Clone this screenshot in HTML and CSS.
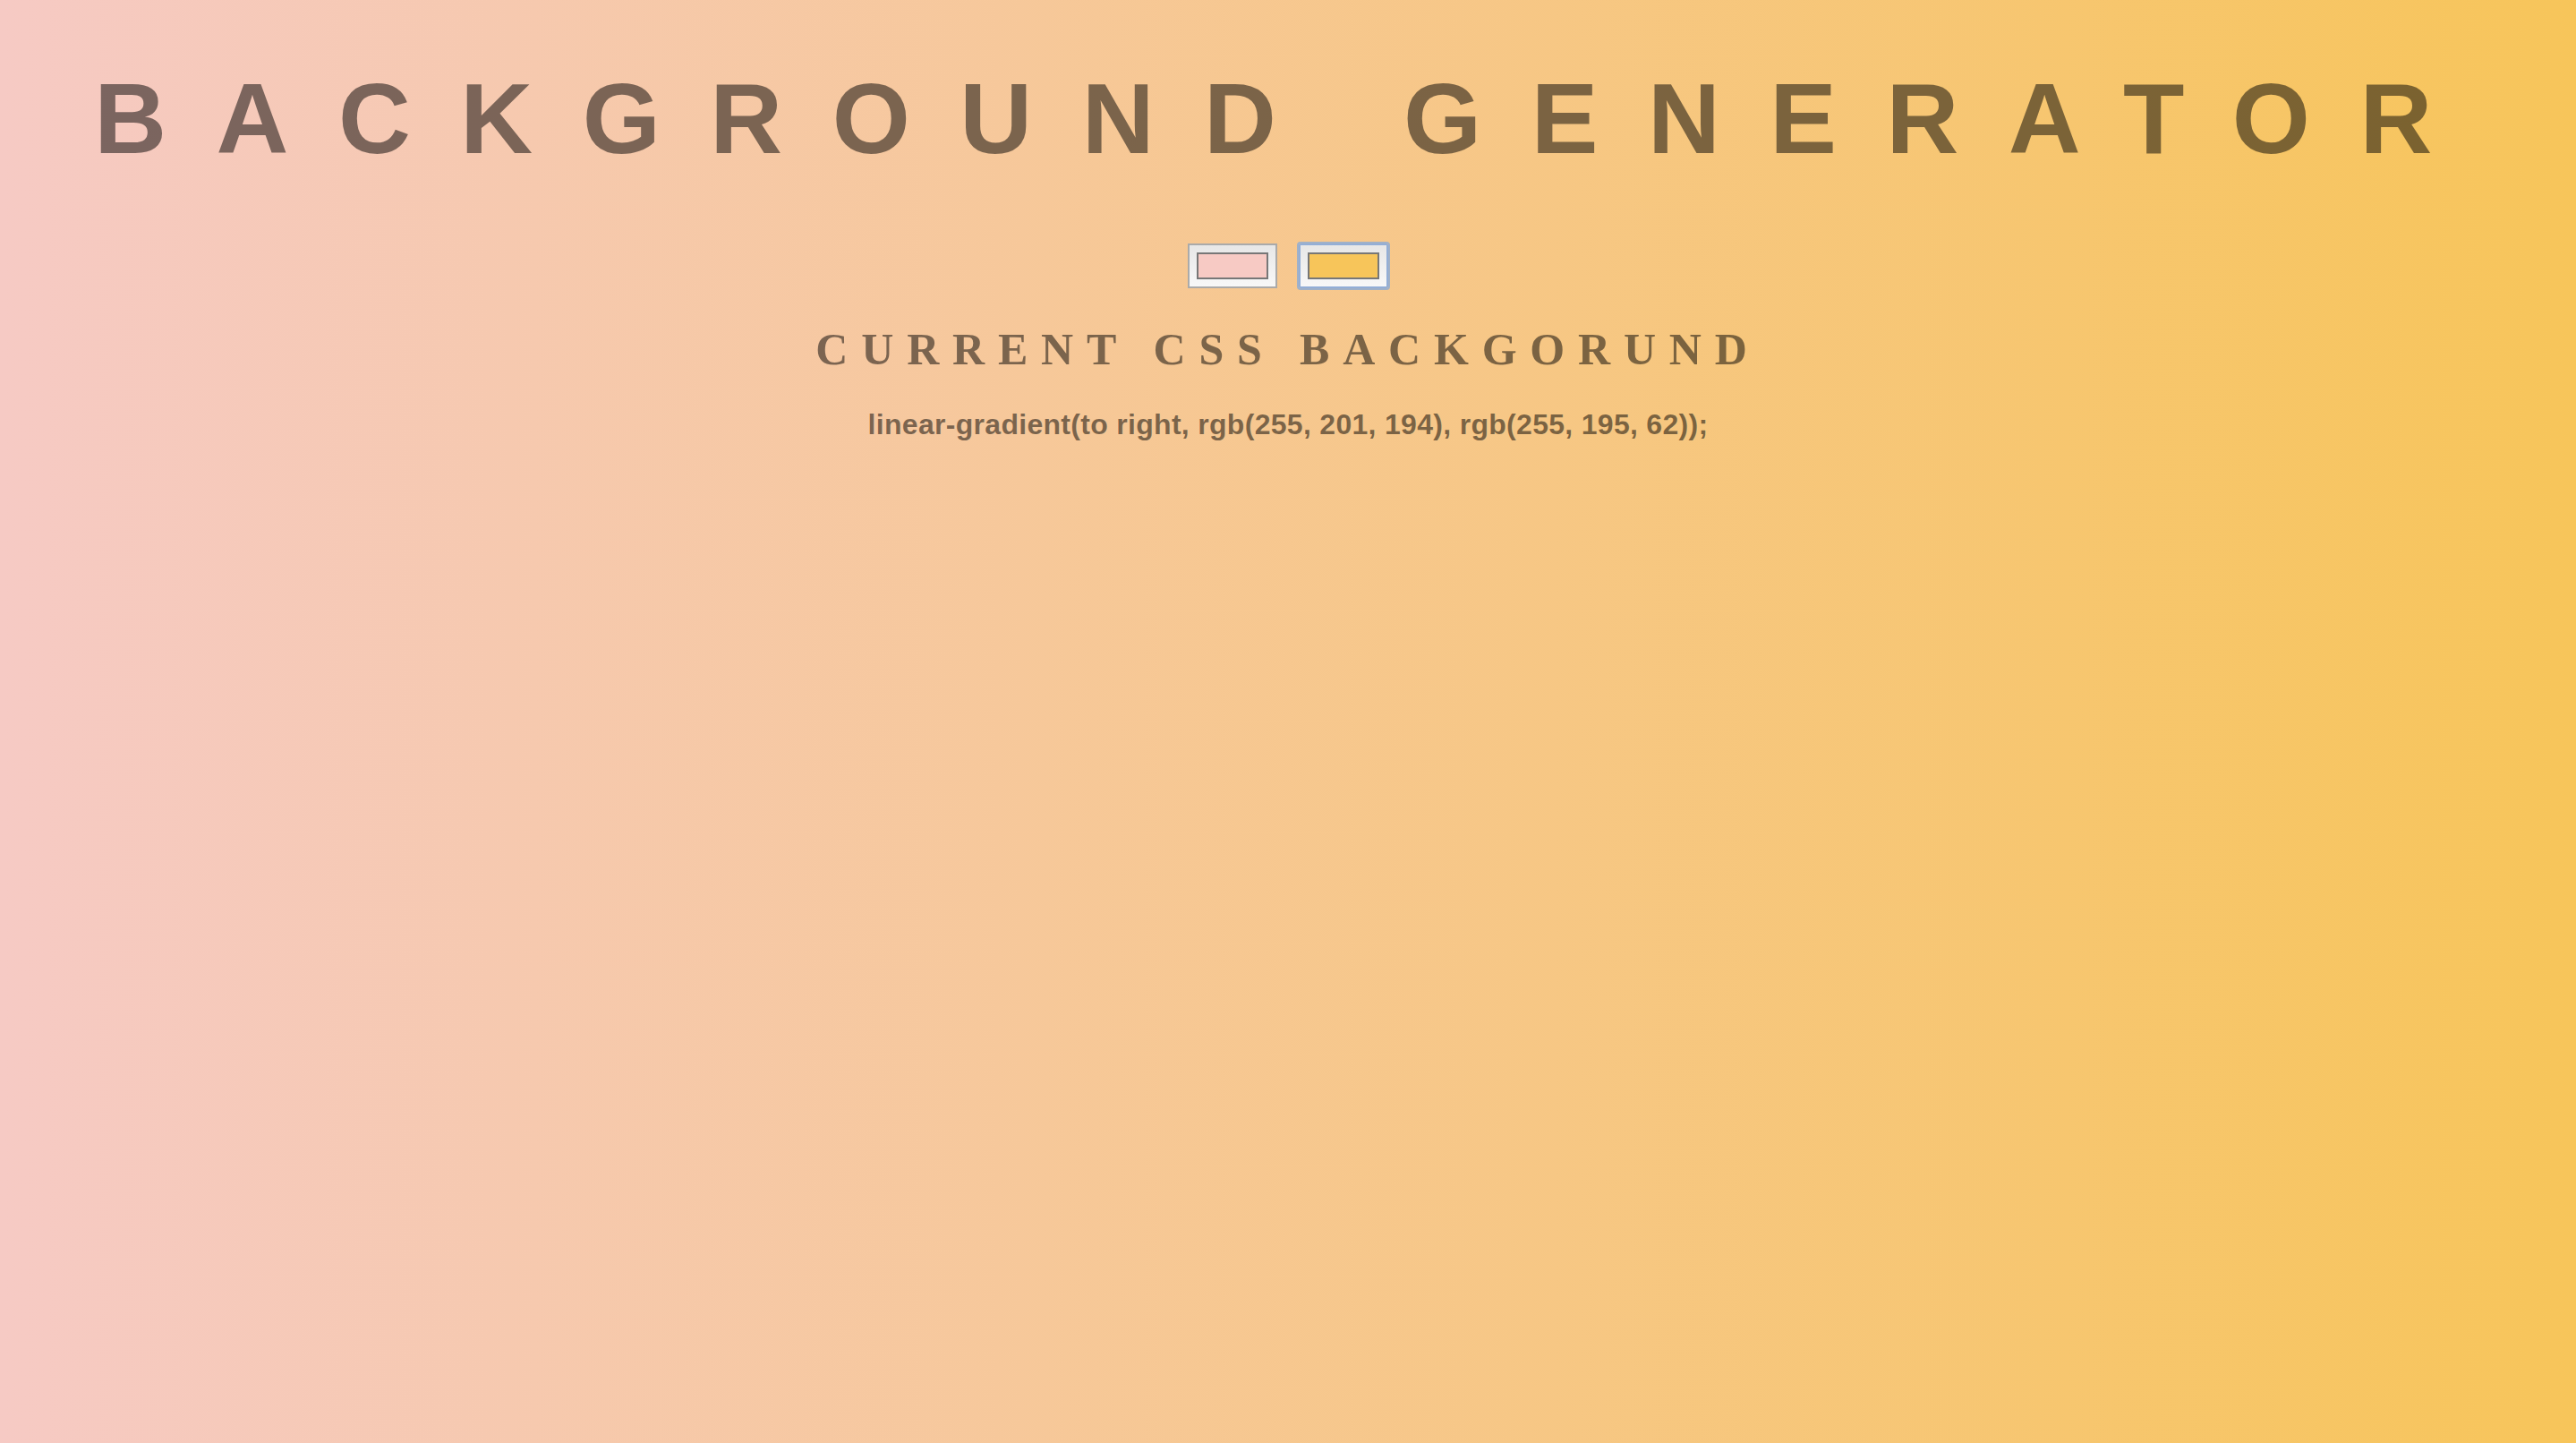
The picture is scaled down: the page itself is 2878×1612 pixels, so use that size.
FILE: index.html
```html
<!DOCTYPE html>
<html lang="en">
<head>
<meta charset="utf-8">
<title>Background Generator</title>
<link rel="stylesheet" href="styles.css">
</head>
<body>
<main class="page">
  <h1 class="title">BACKGROUND GENERATOR</h1>
  <div class="pickers">
    <div class="color-input"><span class="swatch swatch-pink"></span></div>
    <div class="color-input is-focused"><span class="swatch swatch-yellow"></span></div>
  </div>
  <h3 class="subtitle">CURRENT CSS BACKGORUND</h3>
  <p class="css-output">linear-gradient(to right, rgb(255, 201, 194), rgb(255, 195, 62));</p>
</main>
</body>
</html>
```

FILE: styles.css
```css
html, body {
  margin: 0;
  padding: 0;
}

body {
  min-height: 100vh;
  background: linear-gradient(to right, #f6cac4, #f7c55a);
  color: rgba(0, 0, 0, 0.5);
}

.page {
  display: flex;
  flex-direction: column;
  align-items: center;
  text-align: center;
}

.title {
  margin: 77px 0 0 0;
  width: 100%;
  font-family: "Liberation Sans", Arial, sans-serif;
  font-weight: bold;
  font-size: 112px;
  line-height: 112px;
  letter-spacing: 55.5px;
}

.pickers {
  display: flex;
  gap: 24px;
  margin-top: 83px;
}

.color-input {
  box-sizing: border-box;
  width: 100px;
  height: 50px;
  padding: 8px;
  border: 2px solid #aaaaaa;
  background: linear-gradient(to bottom, #e7e7e7, #f8f8f8);
}

.color-input.is-focused {
  border-color: #93aed6;
  box-shadow: 0 0 0 2px #a0b1c8;
  border-radius: 2px;
}

.swatch {
  display: block;
  box-sizing: border-box;
  width: 80px;
  height: 30px;
  border: 2px solid #777777;
}

.swatch-pink {
  background: #f7cac4;
}

.swatch-yellow {
  background: #f7c55a;
}

.subtitle {
  margin: 43px 0 0 0;
  font-family: "Liberation Serif", "Times New Roman", serif;
  font-weight: bold;
  font-size: 50px;
  line-height: 50px;
  letter-spacing: 14.8px;
}

.css-output {
  margin: 43px 0 0 0;
  font-family: "Liberation Sans", Arial, sans-serif;
  font-weight: bold;
  font-size: 32px;
  line-height: 32px;
  letter-spacing: 0.3px;
}
```
